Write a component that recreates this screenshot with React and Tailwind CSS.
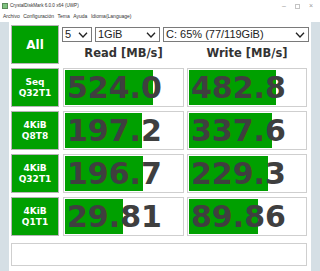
const rows = [
  { top: "Seq", bottom: "Q32T1", read: "524.0", write: "482.8", readBar: 88, writeBar: 87 },
  { top: "4KiB", bottom: "Q8T8", read: "197.2", write: "337.6", readBar: 77, writeBar: 83 },
  { top: "4KiB", bottom: "Q32T1", read: "196.7", write: "229.3", readBar: 78, writeBar: 79 },
  { top: "4KiB", bottom: "Q1T1", read: "29.81", write: "89.86", readBar: 58, writeBar: 69 },
];

function Chevron() {
  return (
    <svg width="10" height="6" viewBox="0 0 10 6" className="shrink-0">
      <polyline points="1,0.8 5,5 9,0.8" fill="none" stroke="#222" strokeWidth="1.3" />
    </svg>
  );
}

function Select({ width, children }) {
  return (
    <div
      className={`flex h-[15px] items-center justify-between border border-[#7a7a7a] bg-white pl-[2px] pr-[3px] text-[11px] leading-none text-[#222] ${width}`}
    >
      <span>{children}</span>
      <Chevron />
    </div>
  );
}

function ScoreCell({ value, bar, width, gap }) {
  return (
    <div className={`relative h-[39px] border border-[#cfcfcf] bg-white p-[1px] ${width} ${gap}`}>
      <div className="absolute bottom-[1px] left-[1px] top-[1px] bg-[#00a000]" style={{ width: bar }} />
      <div className="relative flex h-full items-center pl-[2px] font-['DejaVu_Sans',sans-serif] text-[30px] font-bold leading-none text-[#3f3f3f]">
        {value}
      </div>
    </div>
  );
}

export default function App() {
  return (
    <div className="flex h-[271px] w-[320px] flex-col overflow-hidden bg-white font-['Liberation_Sans',Arial,sans-serif]">
      <div className="flex h-[12px] items-center pl-[2px] text-[4.6px] text-[#333]">
        <span className="mr-[2px] h-[6px] w-[6px] border border-[#5a8a5a] bg-[#7fc27f]" />
        <span>CrystalDiskMark 6.0.0 x64 (UWP)</span>
        <div className="ml-auto flex items-center gap-[9px] pr-[7px] text-[7px] text-[#9a9a9a]">
          <span>–</span>
          <span className="h-[5px] w-[5px] border border-[#c4c4c4]" />
          <span>×</span>
        </div>
      </div>

      <div className="flex h-[10px] items-center gap-[3.5px] pl-[3px] text-[5px] text-[#333]">
        <span>Archivo</span>
        <span>Configuración</span>
        <span>Tema</span>
        <span>Ayuda</span>
        <span>Idioma(Language)</span>
      </div>

      <div className="flex flex-1">
        <div className="w-[10px] bg-[#d5dfe5]" />
        <div className="flex-1 bg-white px-[2px] pt-[3px]">
          <div className="flex h-[39px]">
            <div className="flex w-[48px] items-center justify-center border border-[#b5b5b5] bg-[#00a000] font-['DejaVu_Sans',sans-serif] text-[12px] font-bold text-white">
              All
            </div>
            <div className="ml-[3px] flex flex-col">
              <div className="mt-[2px] flex gap-[3px]">
                <Select width="w-[30px]">5</Select>
                <Select width="w-[65px]">1GiB</Select>
                <Select width="w-[146px]">C: 65% (77/119GiB)</Select>
              </div>
              <div className="flex flex-1 items-center pt-[1px] font-['DejaVu_Sans',sans-serif] text-[11.5px] font-bold text-[#333]">
                <div className="ml-[1px] w-[121px] text-center">Read [MB/s]</div>
                <div className="ml-[3px] w-[120px] text-center">Write [MB/s]</div>
              </div>
            </div>
          </div>

          {rows.map((row) => (
            <div key={row.bottom + row.read} className="mt-[4px] flex">
              <div className="flex h-[39px] w-[48px] flex-col items-center justify-center border border-[#b5b5b5] bg-[#00a000] font-['DejaVu_Sans',sans-serif] text-[9px] font-bold leading-[11px] text-white">
                <span>{row.top}</span>
                <span>{row.bottom}</span>
              </div>
              <ScoreCell value={row.read} bar={row.readBar} width="w-[121px]" gap="ml-[4px]" />
              <ScoreCell value={row.write} bar={row.writeBar} width="w-[120px]" gap="ml-[3px]" />
            </div>
          ))}

          <div className="mt-[7px] h-[23px] w-[296px] border border-[#cfcfcf] bg-white" />
        </div>
        <div className="w-[10px] bg-[#d5dfe5]" />
      </div>
    </div>
  );
}
